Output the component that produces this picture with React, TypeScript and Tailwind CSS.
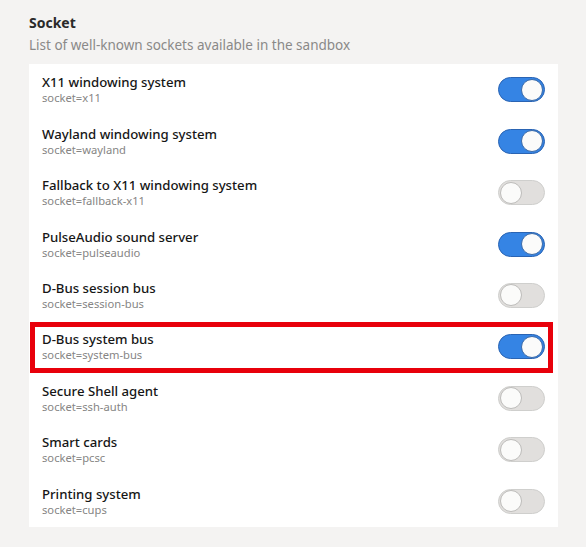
const sockets = [
  { title: "X11 windowing system", key: "x11", on: true },
  { title: "Wayland windowing system", key: "wayland", on: true },
  { title: "Fallback to X11 windowing system", key: "fallback-x11", on: false },
  { title: "PulseAudio sound server", key: "pulseaudio", on: true },
  { title: "D-Bus session bus", key: "session-bus", on: false },
  { title: "D-Bus system bus", key: "system-bus", on: true, marked: true },
  { title: "Secure Shell agent", key: "ssh-auth", on: false },
  { title: "Smart cards", key: "pcsc", on: false },
  { title: "Printing system", key: "cups", on: false },
];

const Toggle = ({ on }: { on: boolean }) => {
  if (on) {
    return (
      <div className="flex h-[25px] w-[47px] items-center justify-end rounded-full border border-[#2a64b3] bg-[#3584e4] p-[1px]">
        <div className="h-[22px] w-[22px] rounded-full border border-[#3a6aa8] bg-[#fbfbfa]" />
      </div>
    );
  }
  return (
    <div className="flex h-[25px] w-[47px] items-center justify-start rounded-full border border-[#cfcfcd] bg-[#e1dfdd] p-[1px]">
      <div className="h-[22px] w-[22px] rounded-full border border-[#bdbcba] bg-[#fbfbfa]" />
    </div>
  );
};

export default function App() {
  return (
    <div className="min-h-screen w-[586px] bg-[#f4f3f2] pt-[14px] font-['Noto_Sans',sans-serif]">
      <div className="px-[29px]">
        <h2 className="text-[14px] font-bold leading-[18px] text-[#2a2a2a]">Socket</h2>
        <p className="mt-[4px] text-[13.5px] leading-[18px] text-[#8a8988]">
          List of well-known sockets available in the sandbox
        </p>
      </div>
      <div className="ml-[29px] mt-[10px] w-[529px] bg-white">
        {sockets.map((s) => (
          <div key={s.key} className="relative flex h-[51.45px] items-center justify-between pl-[13px] pr-[13px]">
            <div className="flex flex-col">
              <span className="text-[13.2px] font-medium leading-[17px] text-[#161616]">{s.title}</span>
              <span className="text-[11.2px] leading-[14px] text-[#868584]">socket={s.key}</span>
            </div>
            <Toggle on={s.on} />
            {s.marked && (
              <div className="pointer-events-none absolute left-[1px] right-[5px] top-[1px] bottom-0 border-[5px] border-[#e8000b]" />
            )}
          </div>
        ))}
      </div>
    </div>
  );
}
